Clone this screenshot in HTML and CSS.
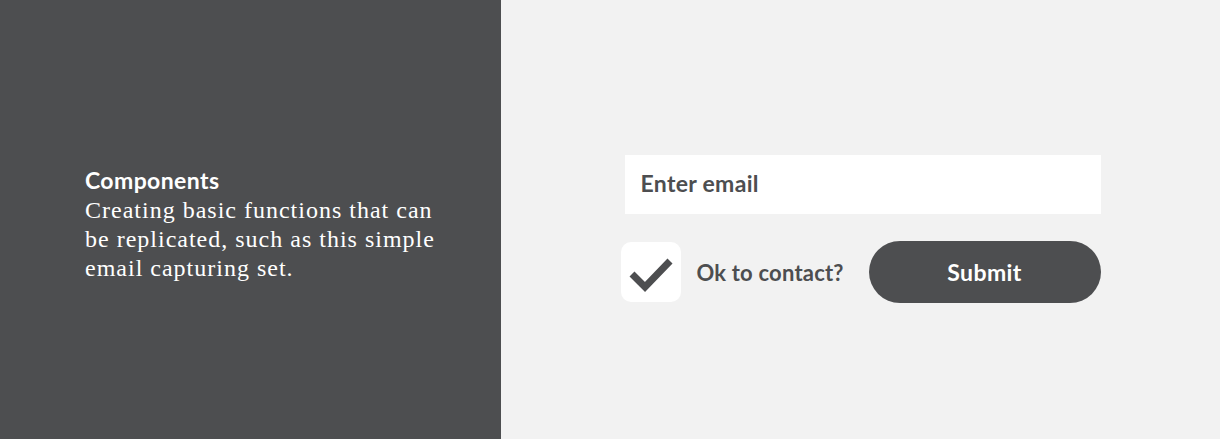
FILE: index.html
```html
<!DOCTYPE html>
<html lang="en">
<head>
    <meta charset="UTF-8">
    <meta name="viewport" content="width=device-width, initial-scale=1.0">
    <title>Components</title>
    <link rel="stylesheet" href="styles.css">
</head>
<body>
    <div class="intro">
        <h2>Components</h2>
        <p>Creating basic functions that can be replicated, such as this simple email capturing set.</p>
    </div>

    <div class="stage">
        <form class="capture">
            <input type="text" class="email" placeholder="Enter email">
            <div class="row">
                <label class="contact">
                    <span class="box">
                        <svg width="60" height="60" viewBox="0 0 60 60">
                            <polyline points="11,32 24,45 49,19" fill="none" stroke="#4d4e50" stroke-width="7"/>
                        </svg>
                    </span>
                    Ok to contact?
                </label>
                <button type="button">Submit</button>
            </div>
        </form>
    </div>
</body>
</html>
```

FILE: styles.css
```css
body {
    display: flex;
    height: 100vh;
    margin: 0;
    font-family: Lato, "Noto Sans", sans-serif;
    color: #4d4e50;
}

.intro {
    width: 416px;
    flex-shrink: 0;
    padding: 167px 0 0 85px;
    background-color: #4d4e50;
    color: #fff;
}

.intro h2 {
    margin: 0;
    font-size: 23px;
    font-weight: 700;
    letter-spacing: 0.4px;
    line-height: 27px;
}

.intro p {
    width: 352px;
    margin: 2px 0 0;
    font-family: "Liberation Serif", serif;
    font-size: 24px;
    letter-spacing: 1px;
    line-height: 29px;
}

.stage {
    flex: 1;
    display: flex;
    justify-content: center;
    padding-top: 155px;
    background-color: #f2f2f2;
}

.capture {
    width: 480px;
}

.email {
    display: block;
    box-sizing: border-box;
    width: 476px;
    height: 59px;
    margin-left: 4px;
    padding: 0 16px 3px;
    border: none;
    outline: none;
    background: #fff;
    font-family: inherit;
    font-size: 23px;
    font-weight: 700;
    letter-spacing: 0.3px;
    color: #4d4e50;
}

.email::placeholder {
    color: #4d4e50;
}

.row {
    display: flex;
    align-items: center;
    justify-content: space-between;
    margin-top: 27px;
}

.contact {
    display: flex;
    align-items: center;
    font-size: 22px;
    font-weight: 700;
    letter-spacing: 0.2px;
}

.box {
    width: 60px;
    height: 60px;
    margin-right: 16px;
    border-radius: 10px;
    background: #fff;
}

.box svg {
    display: block;
}

button {
    width: 232px;
    height: 62px;
    padding-left: 6px;
    border: none;
    border-radius: 31px;
    background-color: #4d4e50;
    color: #fff;
    font-family: inherit;
    font-size: 23px;
    font-weight: 700;
    letter-spacing: 0.4px;
    cursor: pointer;
}
```
